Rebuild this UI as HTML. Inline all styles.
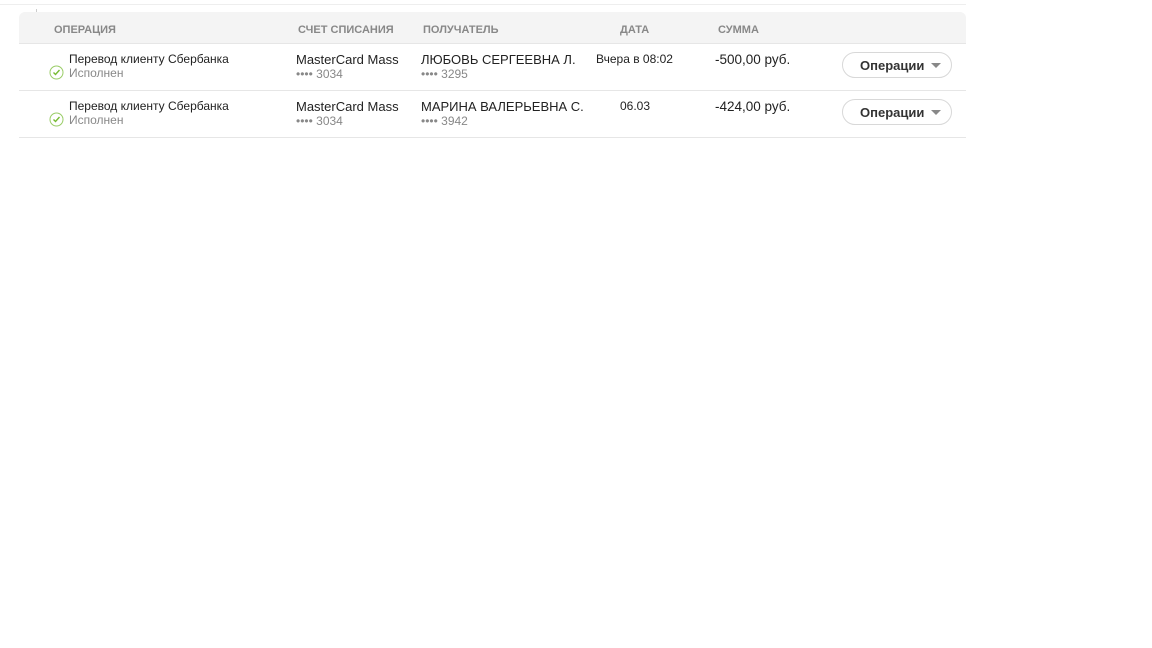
<!DOCTYPE html><html><head><meta charset="utf-8"><style>
body{margin:0;width:1152px;height:648px;background:#fff;font-family:"Liberation Sans",Arial,sans-serif;position:relative;overflow:hidden}
.a{position:absolute;white-space:nowrap}
.h{font-size:11px;font-weight:bold;color:#888;top:24px}
.l{position:absolute;left:19px;width:947px;height:1px;background:#e6e6e6}
.t{font-size:12px;color:#222}
.g{font-size:12px;color:#888}
.m{font-size:13px;color:#222}
.btn{position:absolute;left:842px;width:110px;height:26px;border:1px solid #d8d8d8;border-radius:13px;box-sizing:border-box;font-size:13px;font-weight:bold;color:#333}
.btn span{position:absolute;left:17px;top:5px}
.btn i{position:absolute;left:88px;top:10px;border-left:5px solid transparent;border-right:5px solid transparent;border-top:5px solid #888}
</style></head><body>
<div class="a" style="left:0;top:4px;width:966px;height:1px;background:#eee"></div>
<div class="a" style="left:36px;top:9px;width:1px;height:4px;background:#ccc"></div>
<div class="a" style="left:19px;top:12px;width:947px;height:31px;background:#f4f4f4;border-radius:6px 6px 0 0"></div>
<div class="a h" style="left:54px">ОПЕРАЦИЯ</div>
<div class="a h" style="left:298px">СЧЕТ СПИСАНИЯ</div>
<div class="a h" style="left:423px">ПОЛУЧАТЕЛЬ</div>
<div class="a h" style="left:620px">ДАТА</div>
<div class="a h" style="left:718px">СУММА</div>
<div class="l" style="top:43px"></div>
<div class="l" style="top:90px"></div>
<div class="l" style="top:137px"></div>

<div class="a t" style="left:69px;top:52px">Перевод клиенту Сбербанка</div>
<div class="a g" style="left:69px;top:66px">Исполнен</div>
<svg class="a" style="left:49px;top:65px" width="15" height="15"><circle cx="7.5" cy="7.5" r="6.5" fill="none" stroke="#9c6" stroke-width="1"/><path d="M4.5 7.5l2 2 4-4.5" fill="none" stroke="#7b3" stroke-width="1.4"/></svg>
<div class="a m" style="left:296px;top:52px">MasterCard Mass</div>
<div class="a g" style="left:296px;top:67px">•••• 3034</div>
<div class="a m" style="left:421px;top:52px">ЛЮБОВЬ СЕРГЕЕВНА Л.</div>
<div class="a g" style="left:421px;top:67px">•••• 3295</div>
<div class="a t" style="left:596px;top:52px">Вчера в 08:02</div>
<div class="a" style="left:715px;top:52px;font-size:13.5px;color:#222">-500,00 руб.</div>
<div class="btn" style="top:52px"><span>Операции</span><i></i></div>

<div class="a t" style="left:69px;top:99px">Перевод клиенту Сбербанка</div>
<div class="a g" style="left:69px;top:113px">Исполнен</div>
<svg class="a" style="left:49px;top:112px" width="15" height="15"><circle cx="7.5" cy="7.5" r="6.5" fill="none" stroke="#9c6" stroke-width="1"/><path d="M4.5 7.5l2 2 4-4.5" fill="none" stroke="#7b3" stroke-width="1.4"/></svg>
<div class="a m" style="left:296px;top:99px">MasterCard Mass</div>
<div class="a g" style="left:296px;top:114px">•••• 3034</div>
<div class="a m" style="left:421px;top:99px">МАРИНА ВАЛЕРЬЕВНА С.</div>
<div class="a g" style="left:421px;top:114px">•••• 3942</div>
<div class="a t" style="left:620px;top:99px">06.03</div>
<div class="a" style="left:715px;top:99px;font-size:13.5px;color:#222">-424,00 руб.</div>
<div class="btn" style="top:99px"><span>Операции</span><i></i></div>
</body></html>
